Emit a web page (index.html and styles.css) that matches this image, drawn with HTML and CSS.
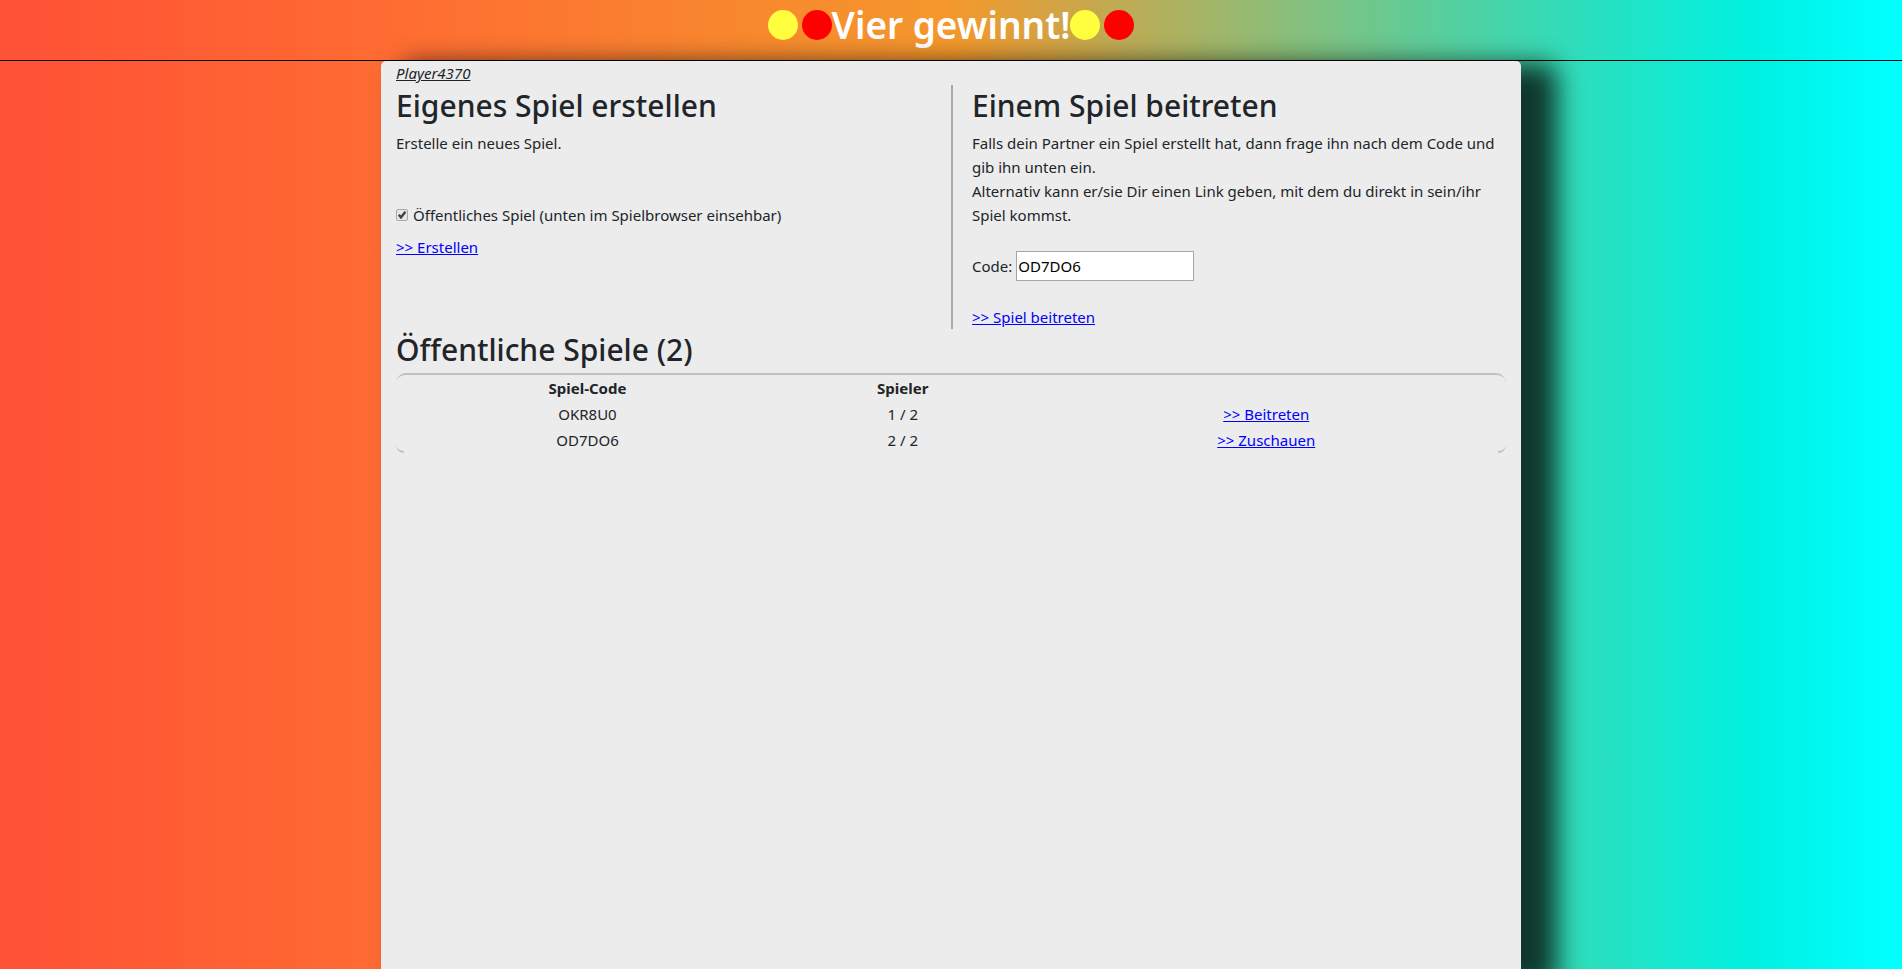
FILE: index.html
```html
<!DOCTYPE html>
<html lang="de">
<head>
<meta charset="utf-8">
<title>Vier gewinnt!</title>
<link rel="stylesheet" href="styles.css">
</head>
<body>
<header class="header">
  <span class="disc yellow"></span><span class="disc red"></span>
  <h1 class="title">Vier gewinnt!</h1>
  <span class="disc yellow"></span><span class="disc red"></span>
</header>
<main class="card">
  <div class="player">Player4370</div>
  <div class="columns">
    <section class="create">
      <h2>Eigenes Spiel erstellen</h2>
      <p>Erstelle ein neues Spiel.</p>
      <label class="public">
        <span class="box">
          <input type="checkbox" class="check" checked>
          <svg class="tick" viewBox="0 0 12 12" aria-hidden="true"><path d="M2.8 5.8 5 8.4 9.4 2.8" fill="none" stroke="#404040" stroke-width="2.4"/></svg>
        </span>
        <span>Öffentliches Spiel (unten im Spielbrowser einsehbar)</span>
      </label>
      <a href="#">&gt;&gt; Erstellen</a>
    </section>
    <section class="join">
      <h2>Einem Spiel beitreten</h2>
      <p>Falls dein Partner ein Spiel erstellt hat, dann frage ihn nach dem Code und gib ihn unten ein.<br>Alternativ kann er/sie Dir einen Link geben, mit dem du direkt in sein/ihr Spiel kommst.</p>
      <div class="code-row"><label for="code">Code:</label><input id="code" class="code" type="text" value="OD7DO6"></div>
      <a href="#">&gt;&gt; Spiel beitreten</a>
    </section>
  </div>
  <h2>Öffentliche Spiele (2)</h2>
  <div class="games-frame">
  <table class="games">
    <thead><tr><th class="col-code">Spiel-Code</th><th class="col-players">Spieler</th><th></th></tr></thead>
    <tbody>
      <tr><td>OKR8U0</td><td>1 / 2</td><td><a href="#">&gt;&gt; Beitreten</a></td></tr>
      <tr><td>OD7DO6</td><td>2 / 2</td><td><a href="#">&gt;&gt; Zuschauen</a></td></tr>
    </tbody>
  </table>
  </div>
</main>
</body>
</html>
```

FILE: styles.css
```css
* { box-sizing: border-box; }
body {
  margin: 0;
  min-height: 100vh;
  display: flex;
  flex-direction: column;
  overflow-x: hidden;
  font: 15px/24px "Segoe UI", "Noto Sans", sans-serif;
  color: #212529;
  background: linear-gradient(to right, #ff5335 0%, #ff5335 2%, #ff6b32 20%, #f4982c 50%, #33dcb8 82%, #00f0e0 92%, #00ffff 99%);
}
.header {
  display: flex;
  justify-content: center;
  height: 61px;
  border-bottom: 1px solid #000;
  color: #fff;
}
.title { margin: 0; padding-top: 2px; font-size: 37px; line-height: 46px; font-weight: 600; }
.disc { width: 30px; height: 30px; margin-top: 10px; border-radius: 50%; }
.yellow { background: #ffff40; margin-right: 4px; }
.red { background: #f00; }
.card {
  flex: 1;
  width: 100%;
  max-width: 1140px;
  margin: 0 auto;
  padding: 0 15px;
  border-radius: 5px 5px 0 0;
  background: #ececec;
  box-shadow: 28px 11px 26px 8px rgba(0, 0, 0, .75);
}
.player { font-style: italic; text-decoration: underline; }
.columns { display: grid; grid-template-columns: 1fr 1fr; }
.join { padding-left: 19px; border-left: 2px solid #aaa; }
h2 { margin: 0; padding: 2px 0 6px; font-size: 30px; line-height: 38px; font-weight: 500; }
p { margin: 0 0 24px; }
.create p { margin-bottom: 48px; }
a { color: #00f; text-decoration: underline; }
.public { display: flex; align-items: center; gap: 5px; margin-bottom: 8px; }
.box { position: relative; display: flex; }
.check {
  appearance: none;
  width: 12px;
  height: 12px;
  margin: 0;
  border: 1px solid #aaa;
  border-radius: 2px;
  background: #e6e6e6;
}
.tick { position: absolute; inset: 0; visibility: hidden; pointer-events: none; }
.check:checked + .tick { visibility: visible; }
.code-row { display: flex; align-items: center; gap: 4px; margin-bottom: 24px; }
.code { width: 178px; height: 30px; padding: 1px; border: 1px solid #a6a6a6; font: inherit; color: #000; background: #fff; }
.games-frame { position: relative; margin-top: -2px; border-top: 2px solid #c0c0c0; border-radius: 10px; }
.games-frame::before, .games-frame::after {
  content: "";
  position: absolute;
  bottom: 0;
  width: 8px;
  height: 10px;
  border-bottom: 2px solid #c0c0c0;
}
.games-frame::before { left: 0; border-bottom-left-radius: 10px; }
.games-frame::after { right: 0; border-bottom-right-radius: 10px; }
.games { width: 100%; border-collapse: collapse; table-layout: fixed; text-align: center; }
.games th, .games td { padding: 1px; }
.col-code { width: 34.5%; }
.col-players { width: 22.3%; }
```
